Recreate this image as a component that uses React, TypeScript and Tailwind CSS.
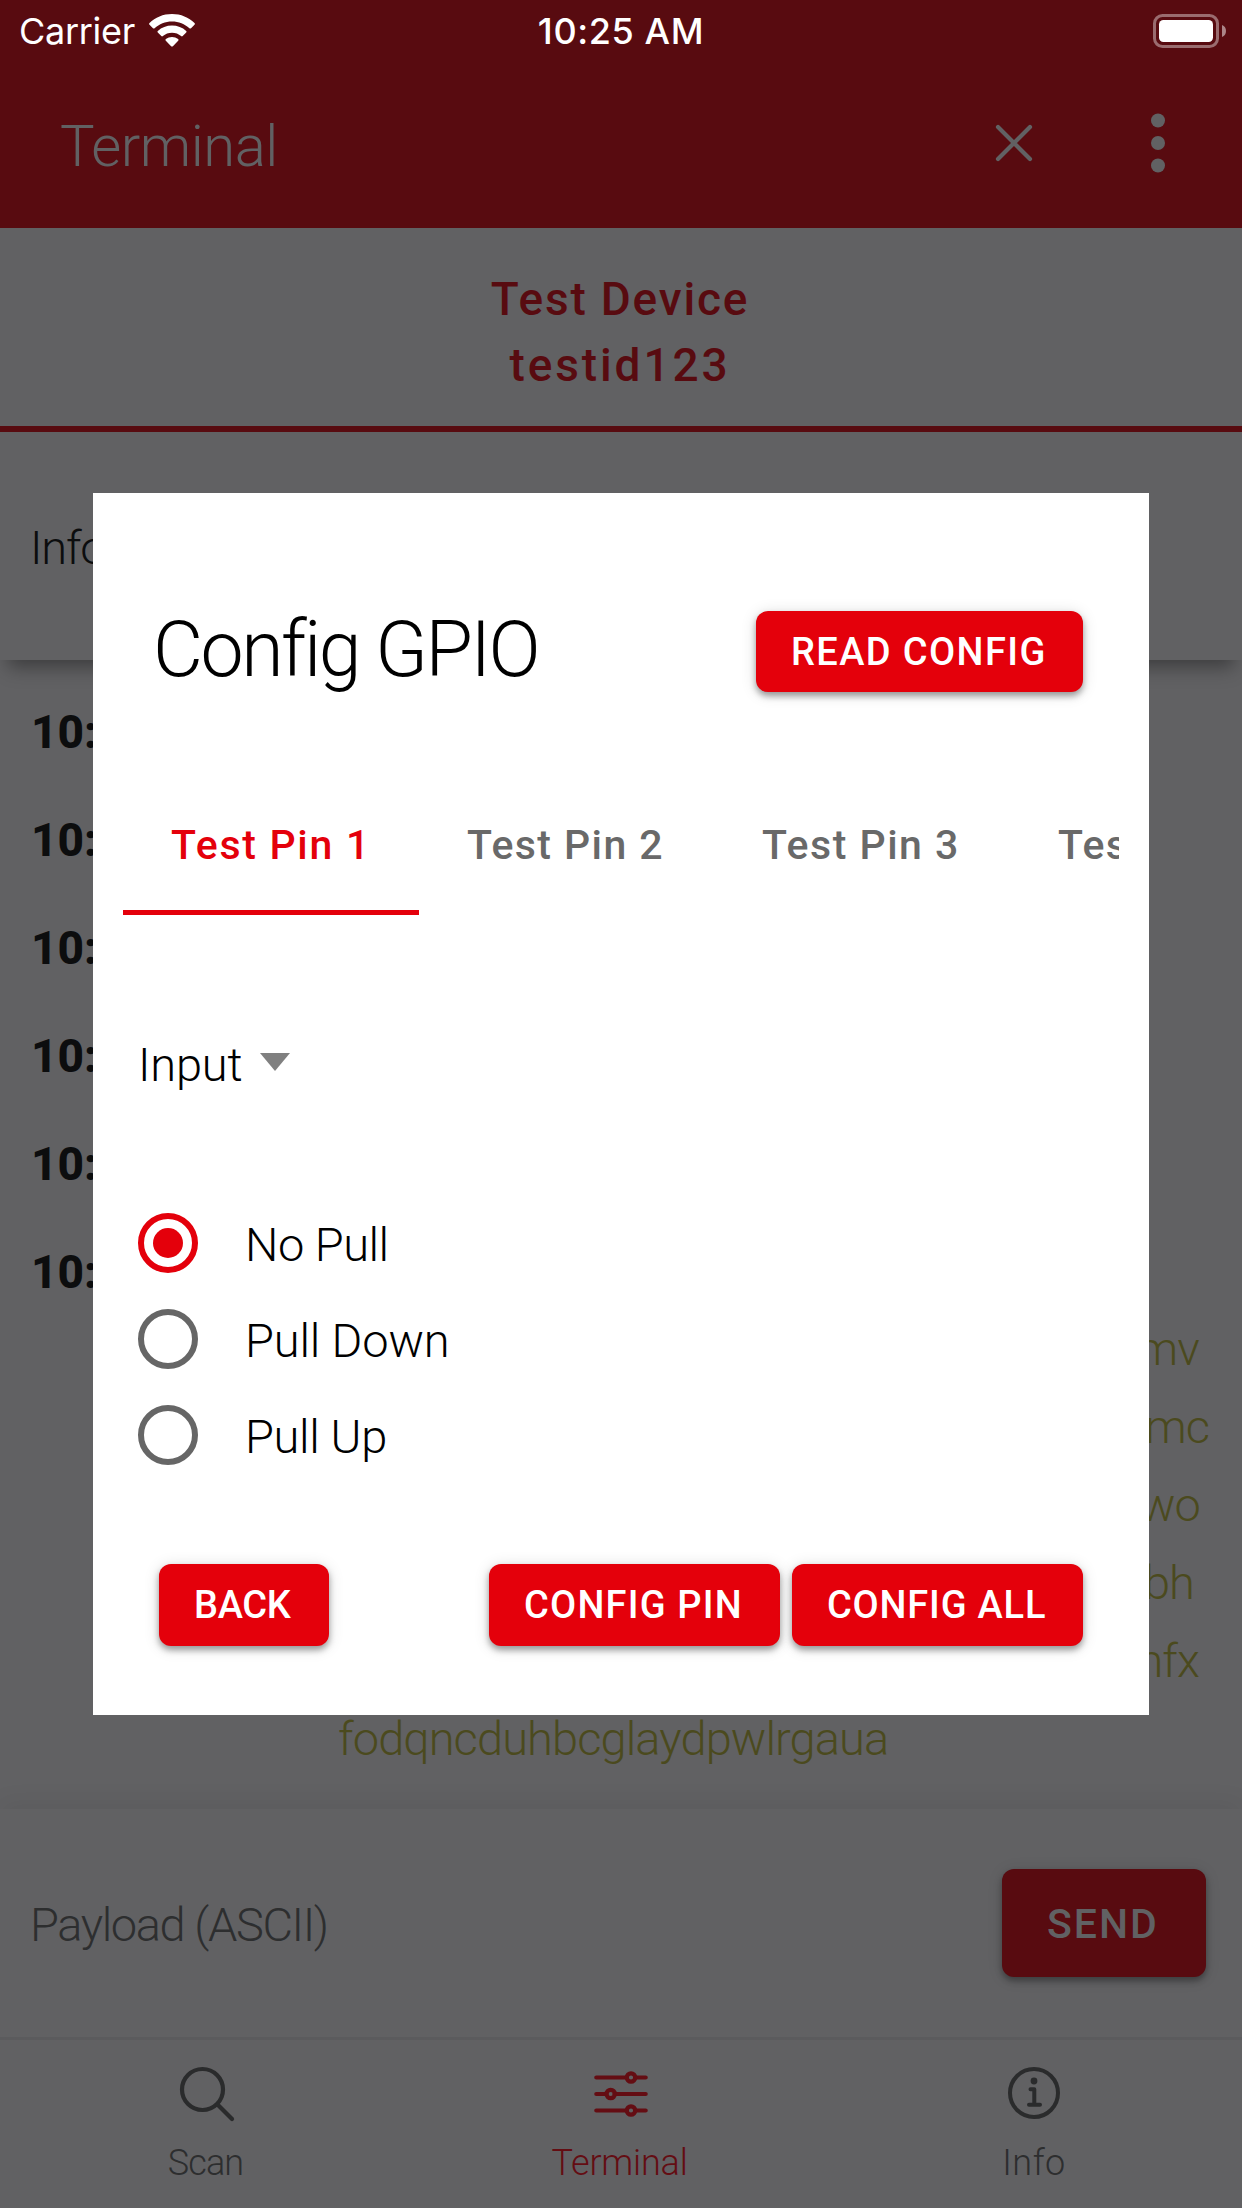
import type { ReactNode } from "react";

const logRows = ["h-[108px]", "h-[108px]", "h-[108px]", "h-[108px]", "h-[108px]", "h-[92px]"];

const payloadLines = [
  { text: "mv", pad: "pr-[43px]" },
  { text: "mc", pad: "pr-[33px]" },
  { text: "wo", pad: "pr-[42px]" },
  { text: "bh", pad: "pr-[48px]" },
  { text: "nfx", pad: "pr-[43px]" },
];

function WifiIcon() {
  return (
    <svg className="ml-[14px] h-[34px] w-[46px]" viewBox="0 0 46 34" fill="#fff">
      <path d="M23 0C14.200 0 6.200 3.400.500 9a1.200 1.200 0 0 0 0 1.700L4 14.200a1.100 1.100 0 0 0 1.600 0C10.200 9.900 16.300 7.400 23 7.400s12.800 2.500 17.400 6.800a1.100 1.100 0 0 0 1.600 0l3.500-3.500a1.200 1.200 0 0 0 0-1.700C39.800 3.400 31.800 0 23 0Z" />
      <path d="M23 11.500c-5.400 0-10.400 2-14.200 5.400a1.200 1.200 0 0 0 0 1.700l3.500 3.500a1.100 1.100 0 0 0 1.600 0c2.500-2.100 5.600-3.300 9.100-3.300s6.600 1.200 9.100 3.300a1.100 1.100 0 0 0 1.600 0l3.500-3.500a1.200 1.200 0 0 0 0-1.700c-3.800-3.400-8.800-5.400-14.200-5.400Z" />
      <path d="M23 23c-2.300 0-4.400.800-6.100 2.100-.600.500-.600 1.200-.100 1.700l5.300 5.400c.500.500 1.300.500 1.800 0l5.300-5.400c.500-.500.500-1.200-.100-1.700C27.400 23.800 25.300 23 23 23Z" />
    </svg>
  );
}

function BatteryIcon() {
  return (
    <svg className="h-[34px] w-[74px]" viewBox="0 0 74 34" fill="none">
      <rect x="1.500" y="1.500" width="63" height="31" rx="8" stroke="#fff" strokeOpacity=".4" strokeWidth="3" />
      <rect x="6" y="6" width="54" height="22" rx="4.500" fill="#fff" />
      <path d="M69 11c2.700 1 4 3.200 4 6s-1.300 5-4 6Z" fill="#fff" fillOpacity=".5" />
    </svg>
  );
}

function SearchIcon() {
  return (
    <svg className="h-[60px] w-[60px]" viewBox="0 0 60 60" fill="none" stroke="#2a2b2c" strokeWidth="4.200" strokeLinecap="round">
      <circle cx="25.500" cy="25.500" r="20.500" />
      <path d="M40.500 40.500 55 55" />
    </svg>
  );
}

function SlidersIcon() {
  return (
    <svg className="h-[60px] w-[60px]" viewBox="0 0 60 60" fill="none" stroke="#640d13" strokeWidth="4.200" strokeLinecap="round">
      <path d="M5.300 13.500H36M44 13.500H54.700M5.300 30H15.500M23.500 30H54.700M5.300 46.500H36M44 46.500H54.700" />
      <circle cx="40" cy="13.500" r="4.200" />
      <circle cx="19.700" cy="30" r="4.200" />
      <circle cx="40" cy="46.500" r="4.200" />
    </svg>
  );
}

function InfoIcon() {
  return (
    <svg className="h-[60px] w-[60px]" viewBox="0 0 60 60" fill="none" stroke="#2a2b2c" strokeWidth="4" strokeLinecap="round" strokeLinejoin="round">
      <circle cx="29" cy="29" r="24" />
      <path d="M25.500 25.300H29.300V40.800M24 40.800H35" />
      <circle cx="29" cy="17" r="3.400" fill="#2a2b2c" stroke="none" />
    </svg>
  );
}

function ActionButton({ className, children }: { className: string; children: ReactNode }) {
  return (
    <button
      className={
        "flex h-full items-center whitespace-nowrap rounded-[12px] bg-[#e4000b] text-[38px] leading-none font-medium text-white shadow-[0_4px_6px_rgba(0,0,0,0.35),0_2px_16px_rgba(0,0,0,0.14)] " +
        className
      }
    >
      {children}
    </button>
  );
}

function RadioRow({ label, checked, className }: { label: string; checked?: boolean; className?: string }) {
  return (
    <label className="flex h-24 items-center pl-[45px]">
      <span
        className={
          checked
            ? "flex size-[60px] items-center justify-center rounded-full border-[6px] border-[#e4000b]"
            : "size-[60px] rounded-full border-[6px] border-[#666]"
        }
      >
        {checked && <span className="size-[30px] rounded-full bg-[#e4000b]" />}
      </span>
      <span className={"ml-[47px] pt-[3px] text-[47px] leading-none font-light text-black " + (className ?? "")}>{label}</span>
    </label>
  );
}

function NavItem({ icon, label, className }: { icon: ReactNode; label: string; className: string }) {
  return (
    <div className="flex flex-1 flex-col items-center pt-6">
      {icon}
      <span className={"mt-[18px] text-[36px] leading-[42px] font-light " + className}>{label}</span>
    </div>
  );
}

function ConfigDialog() {
  return (
    <div className="absolute top-[493px] left-[93px] flex h-[1222px] w-[1056px] flex-col bg-white pt-[118px]">
      <div className="flex h-[81px] items-center justify-between pr-[66px] pl-[60px]">
        <h1 className="-mt-[4px] text-[77px] leading-[90px] font-light tracking-[-2.5px] text-black">Config GPIO</h1>
        <ActionButton className="w-[327px] pl-[35px] tracking-[1.4px]">READ CONFIG</ActionButton>
      </div>
      <div className="mx-[30px] mt-[82px] flex h-[141px] overflow-hidden text-[41px] font-medium whitespace-nowrap text-[#696969]">
        <div className="flex h-full w-[296px] shrink-0 items-center border-b-[5px] border-[#e4000b] pt-[7px] pl-12 tracking-[1.7px] text-[#e4000b]">
          Test Pin 1
        </div>
        <div className="flex h-[136px] w-[296px] shrink-0 items-center pt-[7px] pl-12 tracking-[1.4px]">Test Pin 2</div>
        <div className="flex h-[136px] w-[296px] shrink-0 items-center pt-[7px] pl-[47px] tracking-[1.5px]">Test Pin 3</div>
        <div className="flex h-[136px] w-[296px] shrink-0 items-center pt-[7px] pl-[47px] tracking-[1.4px]">Test Pin 4</div>
      </div>
      <div className="mt-[125px] flex h-12 items-center pl-[45px] text-[47px] leading-none font-light tracking-[-0.2px] text-black">
        Input
        <svg className="mb-[4px] ml-[18px] h-[18px] w-[30px]" viewBox="0 0 30 18" fill="#808080">
          <path d="M0 0H30L15 18Z" />
        </svg>
      </div>
      <div className="mt-[107px] flex flex-col">
        <RadioRow label="No Pull" checked className="tracking-[-0.5px]" />
        <RadioRow label="Pull Down" className="tracking-[-0.15px]" />
        <RadioRow label="Pull Up" className="tracking-[-0.35px]" />
      </div>
      <div className="mt-[81px] flex h-[82px] justify-between pr-[66px] pl-[66px]">
        <ActionButton className="w-[170px] pl-[35px] tracking-[-0.3px]">BACK</ActionButton>
        <div className="flex gap-3">
          <ActionButton className="w-[291px] pl-[35px] tracking-[1.2px]">CONFIG PIN</ActionButton>
          <ActionButton className="w-[291px] pl-[35px] tracking-[0.8px]">CONFIG ALL</ActionButton>
        </div>
      </div>
    </div>
  );
}

export default function App() {
  return (
    <div className="relative flex h-[2208px] w-[1242px] flex-col overflow-hidden bg-[#616163] font-[Roboto,sans-serif]">
      <header className="flex h-[228px] flex-col bg-[#580b10]">
        <div className="grid h-[62px] grid-cols-3 items-center pr-[17px] pl-[19px] font-[Inter,sans-serif] text-[36px] text-white">
          <div className="flex items-center">
            <span className="tracking-[-0.3px]">Carrier</span>
            <WifiIcon />
          </div>
          <span className="pr-[2px] text-center font-medium tracking-[0.6px]">10:25 AM</span>
          <div className="-mr-[2px] flex justify-end">
            <BatteryIcon />
          </div>
        </div>
        <div className="flex h-[166px] items-center pr-[54px] pb-[5px] pl-[60px] text-[#616163]">
          <span className="flex-1 pt-[6px] text-[58px] leading-none font-light tracking-[-0.5px]">Terminal</span>
          <svg className="size-[60px]" viewBox="0 0 60 60" stroke="currentColor" strokeWidth="4.200" strokeLinecap="round">
            <path d="M14 14 46 46M46 14 14 46" />
          </svg>
          <svg className="ml-[84px] size-[60px]" viewBox="0 0 60 60" fill="currentColor">
            <circle cx="30" cy="7.500" r="7" />
            <circle cx="30" cy="30" r="7" />
            <circle cx="30" cy="52.500" r="7" />
          </svg>
        </div>
      </header>

      <section className="flex h-[204px] flex-col items-center border-b-[6px] border-[#580b10] pt-[38px] pr-[2px] text-[46px] leading-[66px] font-medium text-[#580b10]">
        <span className="tracking-[1.8px]">Test Device</span>
        <span className="tracking-[2.9px]">testid123</span>
      </section>

      <section className="z-10 flex h-[228px] items-center bg-[#616163] pt-[4px] pl-[30px] text-[47px] font-light tracking-[-1.2px] text-[#0c0d0e] shadow-[0_15px_18px_-8px_rgba(0,0,0,0.38)]">
        Info
      </section>

      <main className="flex h-[1149px] flex-col overflow-hidden pt-[18px]">
        <div className="flex flex-col pl-[31px] text-[46px] leading-[108px] font-extrabold text-[#0c0d0e]">
          {logRows.map((height, i) => (
            <span key={i} className={height}>10:</span>
          ))}
        </div>
        <div className="flex flex-col pl-[338px] text-[47px] leading-[78px] font-light tracking-[-0.9px] text-[#4b4a1e]">
          {payloadLines.map((line) => (
            <span key={line.text} className={"h-[78px] text-right " + line.pad}>{line.text}</span>
          ))}
          <span className="h-[78px]">fodqncduhbcglaydpwlrgaua</span>
        </div>
      </main>

      <section className="flex h-[228px] items-center justify-between bg-[#616163] pr-9 pl-[30px] shadow-[0_-6px_24px_rgba(0,0,0,0.06)]">
        <span className="pt-[4px] text-[47px] font-light tracking-[-1.4px] text-[#2d2e2f]">Payload (ASCII)</span>
        <button className="flex h-[108px] w-[204px] items-center rounded-[12px] bg-[#580b10] pt-[3px] pl-[45px] text-[41px] font-medium tracking-[2px] text-[#616163] shadow-[0_4px_6px_rgba(0,0,0,0.32),0_2px_16px_rgba(0,0,0,0.1)]">
          SEND
        </button>
      </section>

      <nav className="z-10 flex h-[171px] border-t-[3px] border-[#5b5b5d] bg-[#616163]">
        <NavItem icon={<SearchIcon />} label="Scan" className="pr-[3px] tracking-[-0.9px] text-[#2d2e2f]" />
        <NavItem icon={<SlidersIcon />} label="Terminal" className="pr-[3px] tracking-[-0.2px] text-[#640d13]" />
        <NavItem icon={<InfoIcon />} label="Info" className="pr-[2px] tracking-[0.5px] text-[#2d2e2f]" />
      </nav>

      <div className="absolute inset-0 z-20">
        <ConfigDialog />
      </div>
    </div>
  );
}
